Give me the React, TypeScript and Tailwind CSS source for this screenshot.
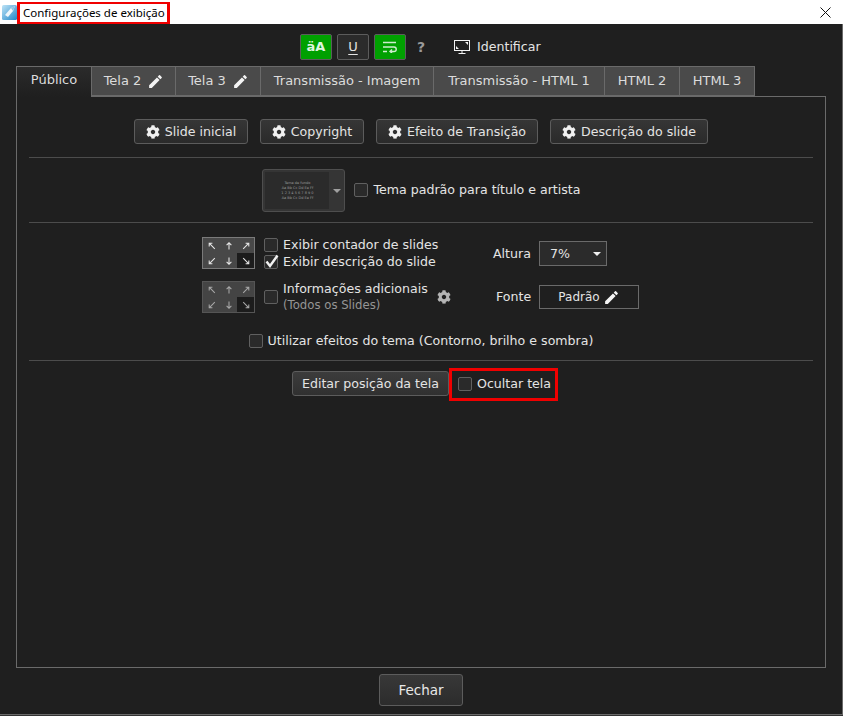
import React from "react";

const Gear = ({ s = 14, c = "#f0f0f0" }: { s?: number; c?: string }) => (
  <svg width={s} height={s} viewBox="0 0 512 512" fill={c} className="shrink-0">
    <path d="M487.4 315.7l-42.6-24.6c4.3-23.2 4.3-47 0-70.2l42.6-24.6c4.9-2.8 7.1-8.6 5.5-14-11.1-35.6-30-67.8-54.7-94.6-3.8-4.1-10-5.1-14.8-2.3L380.8 110c-17.9-15.4-38.5-27.3-60.8-35.1V25.8c0-5.6-3.9-10.5-9.4-11.7-36.7-8.2-74.3-7.8-109.2 0-5.5 1.2-9.4 6.1-9.4 11.7V75c-22.2 7.9-42.8 19.8-60.8 35.1L88.7 85.5c-4.9-2.8-11-1.9-14.8 2.3-24.7 26.7-43.6 58.9-54.7 94.6-1.7 5.4.6 11.2 5.5 14L67.3 221c-4.3 23.2-4.3 47 0 70.2l-42.6 24.6c-4.9 2.8-7.1 8.6-5.5 14 11.1 35.6 30 67.8 54.7 94.6 3.8 4.1 10 5.1 14.8 2.3l42.6-24.6c17.9 15.4 38.5 27.3 60.8 35.1v49.2c0 5.6 3.9 10.5 9.4 11.7 36.7 8.2 74.3 7.8 109.2 0 5.5-1.2 9.4-6.1 9.4-11.7v-49.2c22.2-7.9 42.8-19.8 60.8-35.1l42.6 24.6c4.9 2.8 11 1.9 14.8-2.3 24.7-26.7 43.6-58.9 54.7-94.6 1.5-5.5-.7-11.3-5.6-14.1zM256 336c-44.1 0-80-35.9-80-80s35.9-80 80-80 80 35.9 80 80-35.9 80-80 80z" />
  </svg>
);

const Pencil = ({ s = 17 }: { s?: number }) => (
  <svg width={s} height={s} viewBox="0 0 24 24" fill="#f4f4f4" className="shrink-0">
    <path d="M3 17.25V21h3.75L17.81 9.94l-3.75-3.75L3 17.25zM20.71 7.04a1 1 0 0 0 0-1.41l-2.34-2.34a1 1 0 0 0-1.41 0l-1.83 1.83 3.75 3.75 1.83-1.83z" />
  </svg>
);

const Check = ({ checked = false }: { checked?: boolean }) => (
  <span className="relative block w-[14px] h-[14px] shrink-0 rounded-[2px] border border-[#606060] bg-[#2a2a2a]">
    {checked && (
      <svg width="16" height="16" viewBox="0 0 16 16" className="absolute left-[-1px] top-[-3px]">
        <path d="M2.5 8.5 L6 13 L13.5 2.5" stroke="#f2f2f2" strokeWidth="2.4" fill="none" />
      </svg>
    )}
  </span>
);

const GearButton = ({ label, w }: { label: string; w: string }) => (
  <button className={`${w} h-[25px] flex items-center justify-center gap-[5px] rounded-[3px] border border-[#5c5c5c] bg-gradient-to-b from-[#363636] to-[#2a2a2a] text-[#e4e4e4]`}>
    <Gear />
    <span>{label}</span>
  </button>
);

const Tab = ({ label, w, pencil, active }: { label: string; w: string; pencil?: boolean; active?: boolean }) => (
  <div
    className={`${w} flex items-center justify-center gap-[6px] border-t border-r border-[#6a6a6a] text-[13px] text-[#dcdcdc] ${
      active
        ? "h-[31px] pb-[4px] border-l bg-gradient-to-b from-[#2b2b2b] to-[#1f1f1f] relative z-10"
        : "h-[30px] border-b bg-[#4a4a4a]"
    } ${pencil ? "pl-[1px]" : ""}`}
  >
    <span>{label}</span>
    {pencil && <Pencil />}
  </div>
);

const Arrow = ({ d, dim }: { d: string; dim?: boolean }) => (
  <svg width="8" height="8" viewBox="0 0 10 10" fill="none" stroke={dim ? "#a8a8a8" : "#e8e8e8"} strokeWidth="1.3">
    <path d={d} />
  </svg>
);

const UL = "M8.5 8.5 L1.5 1.5 M1.5 5.5 V1.5 H5.5";
const UP = "M5 9.5 V1 M2 4 L5 1 L8 4";
const UR = "M1.5 8.5 L8.5 1.5 M4.5 1.5 H8.5 V5.5";
const DL = "M8.5 1.5 L1.5 8.5 M1.5 4.5 V8.5 H5.5";
const DN = "M5 .5 V9 M2 6 L5 9 L8 6";
const DR = "M1.5 1.5 L8.5 8.5 M8.5 4.5 V8.5 H4.5";

const PosGrid = ({ dim }: { dim?: boolean }) => (
  <div className={`h-[32px] w-[53px] grid grid-cols-3 grid-rows-2 border ${dim ? "border-[#555555] bg-[#444444]" : "border-[#7a7a7a] bg-[#484848]"} shrink-0`}>
    {[UL, UP, UR, DL, DN].map((d) => (
      <div key={d} className="flex items-center justify-center">
        <Arrow d={d} dim={dim} />
      </div>
    ))}
    <div className="flex items-center justify-center bg-[#1c1c1c]">
      <Arrow d={DR} dim={dim} />
    </div>
  </div>
);

export default function App() {
  return (
    <div
      className="w-[844px] h-[716px] flex flex-col bg-white overflow-hidden text-[12.6px] leading-[16px]"
      style={{ fontFamily: '"DejaVu Sans", sans-serif' }}
    >
      {/* Title bar */}
      <div className="h-[24px] flex items-center bg-white shrink-0">
        <svg width="15" height="16" viewBox="0 0 15 16" className="ml-[2px] shrink-0">
          <defs>
            <linearGradient id="lg" x1="0" y1="0" x2="1" y2="1">
              <stop offset="0" stopColor="#bfe4f6" />
              <stop offset="1" stopColor="#1f86c9" />
            </linearGradient>
          </defs>
          <rect x="0" y="1" width="15" height="15" rx="1.5" fill="url(#lg)" />
          <path d="M3 11 L9 4 L13 2 L11 7 L6 13 Z" fill="#eef6fb" />
          <path d="M9 4 L13 2 L11 7 Z" fill="#8cc4e6" />
        </svg>
        <div
          className="w-[153px] h-[22px] mt-[2px] border-x-[3px] border-y-2 border-[#f00000] flex items-center pl-[3px] text-[11.5px] text-black whitespace-nowrap"
          style={{ fontFamily: '"Noto Sans", sans-serif' }}
        >
          Configurações de exibição
        </div>
        <div className="ml-auto mr-[13px]">
          <svg width="11" height="11" viewBox="0 0 11 11" stroke="#111" strokeWidth="1">
            <path d="M.5.5 L10.5 10.5 M10.5.5 L.5 10.5" />
          </svg>
        </div>
      </div>

      {/* Window body */}
      <div className="w-[843px] h-[691px] shrink-0 flex flex-col bg-[#1f1f1f] border-b border-r border-[#6a6a6a] text-[#e4e4e4]">
        {/* Toolbar */}
        <div className="h-[26px] mt-[10px] flex items-center pl-[300px] shrink-0">
          <button className="w-[32px] h-[26px] flex items-center justify-center rounded-[2px] border border-[#5c5c5c] bg-[#00a000] text-[13px] font-bold text-[#dff5df]">
            äA
          </button>
          <button className="w-[32px] h-[26px] ml-[5px] flex items-center justify-center rounded-[2px] border border-[#5c5c5c] bg-[#2b2b2b]">
            <span className="underline underline-offset-3 text-[13px] text-[#e4e4e4]">U</span>
          </button>
          <button className="w-[32px] h-[26px] ml-[5px] flex items-center justify-center rounded-[2px] border border-[#5c5c5c] bg-[#00a000]">
            <svg width="14" height="12" viewBox="0 0 14 12" fill="none" stroke="#cdeccd" strokeWidth="1.4">
              <path d="M0 1.5 H13 M0 6 H11 a2 2 0 0 1 0 4.5 H7 M9 8.5 L7 10.5 L9 12 M0 10.5 H4" />
            </svg>
          </button>
          <span className="ml-[11px] w-[9px] font-bold text-[14px] text-[#9a9a9a]">?</span>
          <svg width="17" height="15" viewBox="0 0 17 15" className="ml-[28px]" fill="none">
            <rect x=".5" y=".5" width="15" height="10" stroke="#f2f2f2" />
            <path d="M2 9 V6 L5 9 Z M14 2 V5 L11 2 Z" fill="#f2f2f2" />
            <path d="M8 11 V13 M4.5 13.5 H11.5" stroke="#f2f2f2" />
          </svg>
          <span className="ml-[6px]">Identificar</span>
        </div>

        {/* Tabs */}
        <div className="mt-[6px] ml-[16px] h-[30px] flex items-start shrink-0">
          <Tab label="Público" w="w-[76px]" active />
          <Tab label="Tela 2" w="w-[84px]" pencil />
          <Tab label="Tela 3" w="w-[85px]" pencil />
          <Tab label="Transmissão - Imagem" w="w-[173px]" />
          <Tab label="Transmissão - HTML 1" w="w-[171px]" />
          <Tab label="HTML 2" w="w-[75px]" />
          <Tab label="HTML 3" w="w-[75px]" />
        </div>

        {/* Panel */}
        <div className="ml-[16px] w-[810px] h-[572px] shrink-0 border border-[#6a6a6a] flex flex-col px-[12px]">
          <div className="mt-[22px] h-[25px] flex justify-center gap-[12px] shrink-0">
            <GearButton label="Slide inicial" w="w-[114px]" />
            <GearButton label="Copyright" w="w-[104px]" />
            <GearButton label="Efeito de Transição" w="w-[162px]" />
            <GearButton label="Descrição do slide" w="w-[158px]" />
          </div>
          <div className="mt-[13px] h-px bg-[#4c4c4c] shrink-0" />

          <div className="mt-[11px] h-[43px] flex items-center justify-center gap-[9px] pl-[1px] shrink-0">
            <div className="w-[83px] h-[43px] flex rounded-[3px] border border-[#4e4e4e] bg-[#353535] overflow-hidden">
              <div className="m-[2px] mr-0 w-[64px] bg-[#2b2b2b] flex items-center justify-center text-center text-[3.5px] leading-[5px] text-[#9a9a9a]">
                Tema de fundo
                <br />
                Aa Bb Cc Dd Ee Ff
                <br />
                1 2 3 4 5 6 7 8 9 0
                <br />
                Aa Bb Cc Dd Ee Ff
              </div>
              <div className="flex-1 flex items-center justify-center">
                <span className="w-0 h-0 border-x-[4px] border-x-transparent border-t-[4px] border-t-[#a0a0a0]" />
              </div>
            </div>
            <label className="flex items-center gap-[5px] mb-[2px]">
              <Check />
              <span>Tema padrão para título e artista</span>
            </label>
          </div>
          <div className="mt-[10px] h-px bg-[#4c4c4c] shrink-0" />

          {/* Positions */}
          <div className="mt-[14px] ml-[173px] flex shrink-0">
            <div className="w-[291px] flex flex-col">
              <div className="flex items-center h-[32px]">
                <PosGrid />
                <div className="ml-[9px] flex flex-col gap-[3px]">
                  <label className="flex items-center gap-[5px] h-[14px]">
                    <Check />
                    <span>Exibir contador de slides</span>
                  </label>
                  <label className="flex items-center gap-[5px] h-[14px]">
                    <Check checked />
                    <span>Exibir descrição do slide</span>
                  </label>
                </div>
              </div>
              <div className="flex items-center h-[32px] mt-[12px]">
                <PosGrid dim />
                <div className="ml-[9px]">
                  <Check />
                </div>
                <div className="ml-[5px] flex flex-col">
                  <span>Informações adicionais</span>
                  <span className="text-[11.7px] text-[#959595]">(Todos os Slides)</span>
                </div>
                <span className="ml-[9px]">
                  <Gear c="#b4b4b4" />
                </span>
              </div>
            </div>
            <div className="flex flex-col">
              <div className="flex items-center h-[25px] mt-[4px]">
                <span className="w-[46px]">Altura</span>
                <div className="w-[68px] h-[25px] flex items-center justify-between pl-[10px] pr-[3px] border border-[#6a6a6a] bg-[#2b2b2b]">
                  <span>7%</span>
                  <span className="mr-[2px] w-0 h-0 border-x-[4px] border-x-transparent border-t-[4px] border-t-[#f0f0f0]" />
                </div>
              </div>
              <div className="flex items-center h-[24px] mt-[19px]">
                <span className="w-[46px] pl-[3px]">Fonte</span>
                <div className="w-[100px] h-[24px] flex items-center justify-center gap-[3px] border border-[#6a6a6a] bg-[#1f1f1f] text-[12px]">
                  <span>Padrão</span>
                  <Pencil />
                </div>
              </div>
            </div>
          </div>

          <div className="mt-[18px] h-[20px] flex items-center justify-center gap-[5px] shrink-0">
            <Check />
            <span>Utilizar efeitos do tema (Contorno, brilho e sombra)</span>
          </div>
          <div className="mt-[9px] h-px bg-[#4c4c4c] shrink-0" />

          <div className="mt-[7px] ml-[263px] flex items-center shrink-0">
            <button className="w-[157px] h-[25px] mb-[2px] flex items-center justify-center rounded-[3px] border border-[#5c5c5c] bg-gradient-to-b from-[#3c3c3c] to-[#303030] text-[#e4e4e4]">
              Editar posição da tela
            </button>
            <label className="w-[109px] h-[33px] border-[3px] border-[#f00000] flex items-center gap-[5px] pl-[6px] pb-[2px]">
              <Check />
              <span>Ocultar tela</span>
            </label>
          </div>
        </div>

        {/* Footer */}
        <div className="mt-[6px] flex justify-center shrink-0">
          <button className="w-[84px] h-[32px] flex items-center justify-center rounded-[3px] border border-[#5c5c5c] bg-gradient-to-b from-[#383838] to-[#2c2c2c] text-[13.5px] text-[#e8e8e8]">
            Fechar
          </button>
        </div>
      </div>
      <div className="w-[843px] h-px bg-[#333333] shrink-0" />
    </div>
  );
}
